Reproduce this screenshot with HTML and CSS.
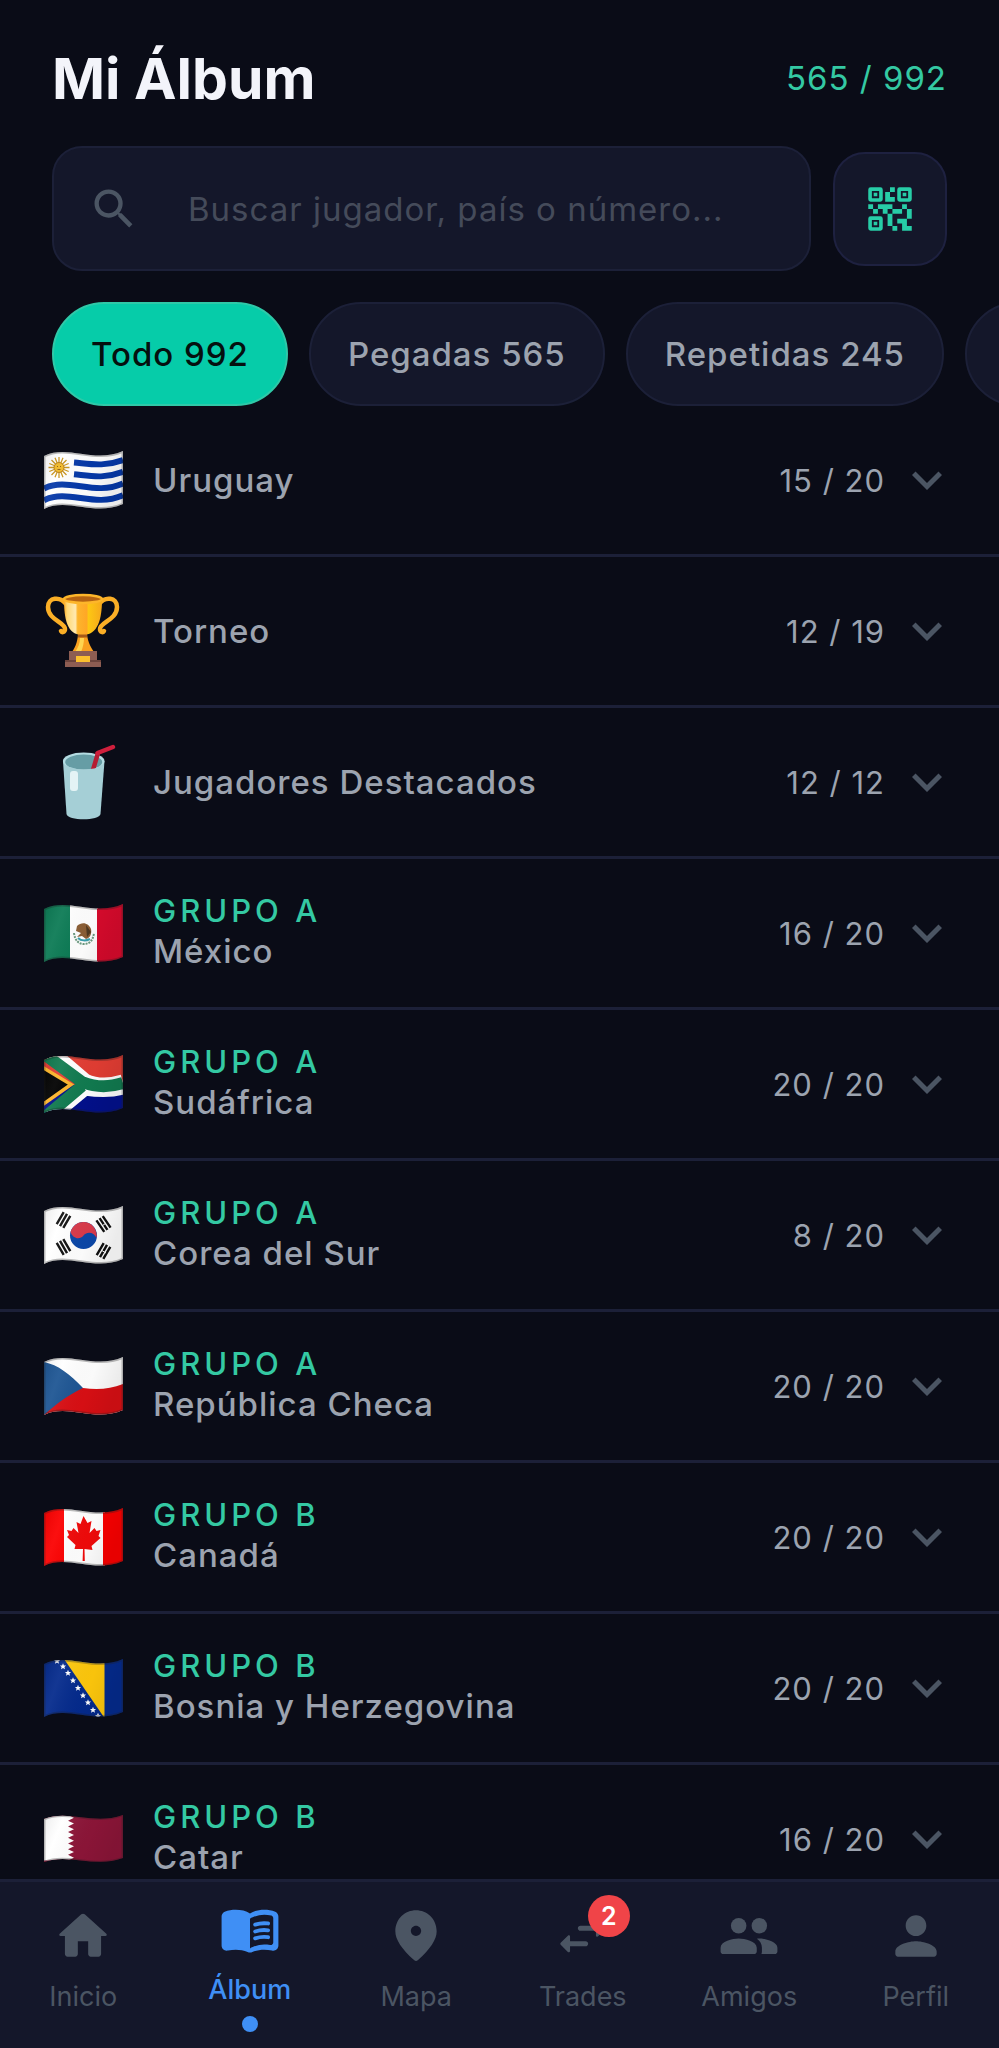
FILE: index.html
```html
<!DOCTYPE html>
<html lang="es">
<head>
<meta charset="utf-8">
<meta name="viewport" content="width=device-width, initial-scale=1">
<title>Mi Álbum</title>
<link rel="stylesheet" href="styles.css">
</head>
<body>
<svg class="defs" aria-hidden="true">
  <defs>
    <clipPath id="wave"><path d="M0 5C24-7 50 13 79 0V53C50 66 24 46 0 58Z"/></clipPath>
    <linearGradient id="shade" x1="0" x2="1" y1="0" y2="0.25">
      <stop offset="0" stop-color="#000" stop-opacity=".08"/>
      <stop offset=".25" stop-color="#fff" stop-opacity=".06"/>
      <stop offset=".65" stop-color="#000" stop-opacity=".02"/>
      <stop offset="1" stop-color="#000" stop-opacity=".08"/>
    </linearGradient>
    <linearGradient id="gold" x1="0" x2="1">
      <stop offset="0" stop-color="#f9a825"/><stop offset=".08" stop-color="#ffd874"/>
      <stop offset=".3" stop-color="#ffe9b0"/><stop offset=".36" stop-color="#fdb52c"/>
      <stop offset=".6" stop-color="#ffa726"/><stop offset=".64" stop-color="#fdc713"/>
      <stop offset="1" stop-color="#f6a81c"/>
    </linearGradient>
    <g id="finish" fill="none" clip-path="url(#wave)">
      <path d="M0 5C24-7 50 13 79 0V53C50 66 24 46 0 58Z" fill="url(#shade)"/>
      <path d="M0 5C24-7 50 13 79 0V53C50 66 24 46 0 58Z" stroke="#222" stroke-opacity=".3" stroke-width="3"/>
    </g>
    <path id="chevron" d="M16.59 8.59L12 13.17 7.41 8.59 6 10l6 6 6-6z"/>
    <path id="star" d="M0-3.2L.9-1 3.1-1 1.4.5 2 2.7 0 1.4-2 2.7-1.4.5-3.1-1-.9-1Z"/>
    <g id="bars"><path d="M-7-3.8H7M-7 0H7M-7 3.8H7" stroke="#111" stroke-width="2.4"/></g>
  </defs>
</svg>

<div class="app">
  <header class="header">
    <div class="title-row">
      <h1 class="title">Mi Álbum</h1>
      <span class="total">565 / 992</span>
    </div>
    <div class="search-row">
      <label class="search">
        <svg class="search-icon" viewBox="0 0 24 24" aria-hidden="true"><path d="M15.5 14h-.79l-.28-.27A6.47 6.47 0 0 0 16 9.5 6.5 6.5 0 1 0 9.5 16c1.61 0 3.09-.59 4.23-1.57l.27.28v.79l5 4.99L20.49 19l-4.99-5zm-6 0C7.01 14 5 11.99 5 9.5S7.01 5 9.5 5 14 7.01 14 9.5 11.99 14 9.5 14z"/></svg>
        <input class="search-input" type="text" placeholder="Buscar jugador, país o número..." aria-label="Buscar">
      </label>
      <button class="scan" type="button" aria-label="Código QR">
        <svg class="scan-icon" viewBox="0 0 24 24" aria-hidden="true"><path fill-rule="evenodd" d="M13 19h2v2h-2zM11 14h2v5h-2zM19 12h2v4h-2zM17 10h2v2h-2zM5 12h2v2H5zM3 10h2v2H3zM12 3h2v2h-2zM4 3h4a1 1 0 0 1 1 1v4a1 1 0 0 1-1 1H4a1 1 0 0 1-1-1V4a1 1 0 0 1 1-1zM4.5 4.5v3h3v-3zM4 15h4a1 1 0 0 1 1 1v4a1 1 0 0 1-1 1H4a1 1 0 0 1-1-1v-4a1 1 0 0 1 1-1zM4.5 16.5v3h3v-3zM16 3h4a1 1 0 0 1 1 1v4a1 1 0 0 1-1 1h-4a1 1 0 0 1-1-1V4a1 1 0 0 1 1-1zM16.500 4.500v3h3v-3zM19 19v-3h-4v2h2v3h4v-2zM13 12h4v2h-4zM7 10h6v2h-2v2H9v-2H7zM10 5h2v2h2v2h-4zM5.250 5.250h1.500v1.500h-1.500zM5.250 17.250h1.500v1.500h-1.500zM17.250 5.250h1.500v1.500h-1.500z"/></svg>
      </button>
    </div>
    <div class="chips">
      <button class="chip chip-active" type="button" aria-pressed="true">Todo 992</button>
      <button class="chip" type="button">Pegadas 565</button>
      <button class="chip" type="button">Repetidas 245</button>
      <button class="chip" type="button" aria-label="Faltan"></button>
    </div>
  </header>

  <main class="list">
    <button class="row" type="button">
      <svg class="flag" viewBox="0 0 79 59" aria-hidden="true">
        <g clip-path="url(#wave)"><path fill="#fff" d="M0 0h79v59H0z"/>
          <g fill="none" stroke="#0538a8" stroke-width="5.900">
            <path d="M30 11.500C47 13 60 16 79 9M30 23.300C47 25 60 28 79 20.800"/>
            <path d="M0 37.500C24 25.500 50 45.500 79 32.500M0 49.300C24 37.300 50 57.300 79 44.300"/>
          </g>
          <g stroke="#c8941a" stroke-width="1.300"><path d="M15 6v21M4.500 16.500h21M7.500 9l15 15M22.500 9l-15 15M11 6.800l8 19.400M19 6.800l-8 19.400M5.300 12.500l19.400 8M24.700 12.500l-19.400 8"/></g>
          <circle cx="15" cy="16.500" r="5" fill="#f0b823" stroke="#b67a14"/>
          <path d="M13 15.500h1M16 15.500h1M13.500 18.500h3" stroke="#8d5c10"/>
        </g><use href="#finish"/>
      </svg>
      <span class="info"><span class="name">Uruguay</span></span>
      <span class="count">15 / 20</span>
      <svg class="chevron" viewBox="0 0 24 24" aria-hidden="true"><use href="#chevron"/></svg>
    </button>

    <button class="row" type="button">
      <svg class="emoji" viewBox="0 0 79 79" aria-hidden="true">
        <g fill="none" stroke="#fbaf26" stroke-width="4.500" stroke-linecap="round"><path d="M22 12C16 4 4 5 4 15C4 28 21 30 21 37C21 40 18 41 17 39"/><path d="M55 12C61 4 73 5 73 15C73 28 56 30 56 37C56 40 59 41 60 39"/></g>
        <path fill="#f9a01f" d="M34 40h9c0 8 3 14 7 20H28c4-6 6-12 6-20z"/><path fill="#ffd54f" d="M36 46h4c0 5-1 9-3 14h-6c3-4 5-9 5-14z"/>
        <path fill="#8d5d52" d="M25 59h28v9h4v7H21v-7h4z"/><path fill="#6d453d" d="M21 68h36v2H21z"/><path fill="#fcc02e" d="M32 64h14v6H32z"/>
        <path fill="url(#gold)" d="M20 7c0 20 3 36 18.500 36S58 27 58 7z"/>
        <ellipse cx="39" cy="7" rx="19" ry="4" fill="#b56312" stroke="#fdb62a" stroke-width="2.500"/>
        <path d="M34 44h9" stroke="#a65a19" stroke-width="3"/>
      </svg>
      <span class="info"><span class="name">Torneo</span></span>
      <span class="count">12 / 19</span>
      <svg class="chevron" viewBox="0 0 24 24" aria-hidden="true"><use href="#chevron"/></svg>
    </button>

    <button class="row" type="button">
      <svg class="emoji" viewBox="0 0 79 79" aria-hidden="true">
        <path fill="#a5cfd6" d="M19 18l3.500 53c1 7 33 7 34 0L60.500 18z"/>
        <ellipse cx="39.700" cy="18" rx="20.800" ry="8.500" fill="#b4dce2"/><ellipse cx="39.700" cy="19" rx="18.500" ry="7.500" fill="#669da5"/>
        <path d="M49 27L54 10" stroke="#b61c32" stroke-width="4.500"/><path d="M53.500 10L69 4" stroke="#cf1f3c" stroke-width="4.500" stroke-linecap="round"/>
        <path fill="#a5cfd6" d="M22 22c6 6 29 6 36 0v7H22z"/>
        <rect x="26" y="28" width="8" height="20" rx="3" fill="#e4f3f5"/>
      </svg>
      <span class="info"><span class="name">Jugadores Destacados</span></span>
      <span class="count">12 / 12</span>
      <svg class="chevron" viewBox="0 0 24 24" aria-hidden="true"><use href="#chevron"/></svg>
    </button>

    <button class="row" type="button">
      <svg class="flag" viewBox="0 0 79 59" aria-hidden="true">
        <g clip-path="url(#wave)"><path fill="#fff" d="M26 0h28v59H26z"/><path fill="#0b7a54" d="M0 0h26v59H0z"/><path fill="#d80a2c" d="M53 0h26v59H53z"/>
          <path d="M30 29c1 8 5 11 10 11s9-3 10-11" fill="none" stroke="#6d9a80" stroke-width="2" stroke-dasharray="2 1"/>
          <path d="M33 22c5-5 12-3 14 3 1 5-1 9-5 10l-4-3-5 1 4-4-5-2z" fill="#8b5e35"/><path d="M42 21l5 7-4 5z" fill="#4e3820"/><path d="M34 34c3 3 8 3 12 1" fill="none" stroke="#39a0ad" stroke-width="2"/>
        </g><use href="#finish"/>
      </svg>
      <span class="info"><span class="group">GRUPO A</span><span class="name">México</span></span>
      <span class="count">16 / 20</span>
      <svg class="chevron" viewBox="0 0 24 24" aria-hidden="true"><use href="#chevron"/></svg>
    </button>

    <button class="row" type="button">
      <svg class="flag" viewBox="0 0 79 59" aria-hidden="true">
        <g clip-path="url(#wave)"><path fill="#e23d33" d="M0 0h79v30H0z"/><path fill="#02108c" d="M0 30h79v29H0z"/>
          <path d="M6-4L41 26C54 32 66 31 79 27M6 62L41 33C54 35 66 36 79 32" fill="none" stroke="#fff" stroke-width="15"/>
          <path d="M0-1L38 27C54 33 66 32 79 28M0 63L38 31" fill="none" stroke="#117b50" stroke-width="12"/>
          <path d="M-2 12L27 29.500-2 50z" fill="#000" stroke="#fdb52a" stroke-width="3.500"/>
        </g><use href="#finish"/>
      </svg>
      <span class="info"><span class="group">GRUPO A</span><span class="name">Sudáfrica</span></span>
      <span class="count">20 / 20</span>
      <svg class="chevron" viewBox="0 0 24 24" aria-hidden="true"><use href="#chevron"/></svg>
    </button>

    <button class="row" type="button">
      <svg class="flag" viewBox="0 0 79 59" aria-hidden="true">
        <g clip-path="url(#wave)"><path fill="#fff" d="M0 0h79v59H0z"/>
          <circle cx="39.500" cy="29.500" r="13.500" fill="#0b47a8"/>
          <path d="M26.500 26C29 19 34 16 39.500 16A13.500 13.500 0 0 1 52.500 32C50 26 43 25 39.500 29.500S29 33 26.500 26Z" fill="#d93a4b"/>
          <use href="#bars" transform="translate(19.500 14) rotate(-60)"/><use href="#bars" transform="translate(59.500 18) rotate(56)"/>
          <use href="#bars" transform="translate(19.500 41) rotate(60)"/><use href="#bars" transform="translate(59.500 45) rotate(-60)"/>
          <path d="M58 20l4-3M57 44l5 3" stroke="#fff"/>
        </g><use href="#finish"/>
      </svg>
      <span class="info"><span class="group">GRUPO A</span><span class="name">Corea del Sur</span></span>
      <span class="count">8 / 20</span>
      <svg class="chevron" viewBox="0 0 24 24" aria-hidden="true"><use href="#chevron"/></svg>
    </button>

    <button class="row" type="button">
      <svg class="flag" viewBox="0 0 79 59" aria-hidden="true">
        <g clip-path="url(#wave)"><path fill="#fff" d="M0 0h79v59H0z"/><path fill="#d90f14" d="M0 59V31h39C54 33 66 32 79 27v32z"/><path fill="#1d5593" d="M0 5C14 8 26 17 39 31C24 38 12 47 0 58z"/></g><use href="#finish"/>
      </svg>
      <span class="info"><span class="group">GRUPO A</span><span class="name">República Checa</span></span>
      <span class="count">20 / 20</span>
      <svg class="chevron" viewBox="0 0 24 24" aria-hidden="true"><use href="#chevron"/></svg>
    </button>

    <button class="row" type="button">
      <svg class="flag" viewBox="0 0 79 59" aria-hidden="true">
        <g clip-path="url(#wave)"><path fill="#fff" d="M19 0h42v59H19z"/><path fill="#fb0000" d="M0 0h20v59H0zM59 0h20v59H59z"/>
          <path fill="#f00a0a" d="M39.500 8l4 7 4-2-2 12 5-5 2 3 4-1-2 6 2 2-9 8 1 4-8-1 .3 12h-2.200l.4-12-8.500 0 1-4-8.500-8 2-2-2-5 4.500 1 2-3 5 5-2-11 4 2z"/>
        </g><use href="#finish"/>
      </svg>
      <span class="info"><span class="group">GRUPO B</span><span class="name">Canadá</span></span>
      <span class="count">20 / 20</span>
      <svg class="chevron" viewBox="0 0 24 24" aria-hidden="true"><use href="#chevron"/></svg>
    </button>

    <button class="row" type="button">
      <svg class="flag" viewBox="0 0 79 59" aria-hidden="true">
        <g clip-path="url(#wave)"><path fill="#042a8c" d="M0 0h79v59H0z"/><path fill="#fdc70c" d="M20 0h40.500v59z"/>
          <g fill="#fff"><use href="#star" x="13" y="2"/><use href="#star" x="19" y="7.500"/><use href="#star" x="24" y="14"/><use href="#star" x="29" y="21.500"/><use href="#star" x="34" y="29"/><use href="#star" x="39" y="36.500"/><use href="#star" x="44" y="43.500"/><use href="#star" x="49" y="51"/><use href="#star" x="54" y="57"/></g>
        </g><use href="#finish"/>
      </svg>
      <span class="info"><span class="group">GRUPO B</span><span class="name">Bosnia y Herzegovina</span></span>
      <span class="count">20 / 20</span>
      <svg class="chevron" viewBox="0 0 24 24" aria-hidden="true"><use href="#chevron"/></svg>
    </button>

    <button class="row" type="button">
      <svg class="flag flag-wide" viewBox="0 0 79 59" preserveAspectRatio="none" aria-hidden="true">
        <g clip-path="url(#wave)"><path fill="#8c1538" d="M0 0h79v59H0z"/><path fill="#fff" d="M0 0h24l6 3.500-6 3.500 6 3.500-6 3.500 6 3.500-6 3.500 6 3.500-6 3.500 6 3.500-6 3.500 6 3.500-6 3.500 6 3.500-6 3.500 6 3.500-6 3.500H0z"/></g><use href="#finish"/>
      </svg>
      <span class="info"><span class="group">GRUPO B</span><span class="name">Catar</span></span>
      <span class="count">16 / 20</span>
      <svg class="chevron" viewBox="0 0 24 24" aria-hidden="true"><use href="#chevron"/></svg>
    </button>
  </main>

  <nav class="nav">
    <a class="tab" href="#inicio">
      <svg class="tab-icon" viewBox="0 0 24 24" aria-hidden="true"><path d="M10 19v-5h4v5c0 .55.45 1 1 1h3c.55 0 1-.45 1-1v-7h1.700c.46 0 .68-.57.33-.87L12.670 3.600c-.38-.34-.96-.34-1.340 0l-8.360 7.530c-.34.3-.13.87.33.87H5v7c0 .55.45 1 1 1h3c.55 0 1-.45 1-1z"/></svg>
      <span class="tab-label">Inicio</span>
    </a>
    <a class="tab tab-active" href="#album" aria-current="page">
      <svg class="tab-icon" viewBox="0 0 24 24" aria-hidden="true"><path d="M17.500 4.500c-1.950 0-4.050.4-5.500 1.500-1.450-1.100-3.550-1.500-5.500-1.500-1.450 0-2.990.22-4.280.79C1.490 5.620 1 6.330 1 7.140v11.280c0 1.300 1.220 2.260 2.480 1.940.98-.25 2.020-.36 3.020-.36 1.560 0 3.220.26 4.560.92.6.3 1.280.3 1.870 0 1.340-.67 3-.92 4.560-.92 1 0 2.040.11 3.020.36 1.260.33 2.480-.63 2.480-1.940V7.140c0-.81-.49-1.520-1.220-1.850-1.280-.57-2.820-.79-4.270-.79zM21 17.230c0 .63-.58 1.090-1.200.98-.75-.14-1.530-.2-2.300-.2-1.700 0-4.150.65-5.500 1.500V8c1.350-.85 3.800-1.500 5.500-1.500.92 0 1.830.09 2.700.28.46.1.8.51.8.98z"/><path d="M14 10.300c1.500-.5 3.400-.65 5-.45M14 12.960c1.500-.5 3.400-.65 5-.45M14 15.620c1.500-.5 3.400-.65 5-.45" fill="none" stroke="currentColor" stroke-width="1.500" stroke-linecap="round"/></svg>
      <span class="tab-label">Álbum</span>
      <span class="tab-dot"></span>
    </a>
    <a class="tab" href="#mapa">
      <svg class="tab-icon" viewBox="0 0 24 24" aria-hidden="true"><path d="M12 2c-4.200 0-8 3.220-8 8.200 0 3.180 2.450 6.920 7.340 11.230.38.33.95.33 1.330 0C17.550 17.120 20 13.380 20 10.200 20 5.220 16.200 2 12 2zm0 10c-1.100 0-2-.9-2-2s.9-2 2-2 2 .9 2 2-.9 2-2 2z"/></svg>
      <span class="tab-label">Mapa</span>
    </a>
    <a class="tab" href="#trades">
      <span class="tab-figure">
        <svg class="tab-icon" viewBox="0 0 24 24" aria-hidden="true"><path d="M6.140 11.860l-2.780 2.790c-.19.2-.19.51 0 .71l2.780 2.790c.31.32.85.09.85-.35V16H13c.55 0 1-.45 1-1s-.45-1-1-1H6.990v-1.790c0-.45-.54-.67-.85-.35zm14.510-3.210l-2.780-2.790c-.31-.32-.85-.09-.85.35V8H11c-.55 0-1 .45-1 1s.45 1 1 1h6.010v1.790c0 .45.54.67.85.35l2.780-2.790c.2-.19.2-.51.01-.7z"/></svg>
        <span class="badge">2</span>
      </span>
      <span class="tab-label">Trades</span>
    </a>
    <a class="tab" href="#amigos">
      <svg class="tab-icon" viewBox="0 0 24 24" aria-hidden="true"><circle cx="8" cy="8" r="3"/><circle cx="16" cy="8" r="3"/><path d="M8 13c-2.330 0-7 1.170-7 3.500V18c0 .55.45 1 1 1h12c.55 0 1-.45 1-1v-1.500c0-2.330-4.670-3.500-7-3.500zM16 13c-.29 0-.62.02-.97.05.02.01.03.03.04.04 1.140.83 1.930 1.940 1.930 3.410V18c0 .35-.07.69-.18 1H22c.55 0 1-.45 1-1v-1.500c0-2.330-4.670-3.500-7-3.500z"/></svg>
      <span class="tab-label">Amigos</span>
    </a>
    <a class="tab" href="#perfil">
      <svg class="tab-icon" viewBox="0 0 24 24" aria-hidden="true"><path d="M12 12c2.210 0 4-1.790 4-4s-1.790-4-4-4-4 1.790-4 4 1.790 4 4 4zm0 2c-2.670 0-8 1.340-8 4v1c0 .55.45 1 1 1h14c.55 0 1-.45 1-1v-1c0-2.660-5.330-4-8-4z"/></svg>
      <span class="tab-label">Perfil</span>
    </a>
  </nav>
</div>
</body>
</html>
```
FILE: styles.css
```css
:root {
  --bg: #0a0c17;
  --panel: #14172a;
  --line: #1c2038;
  --accent: #06cca9;
  --accent-text: #34c9a3;
  --muted: #9ca3af;
  --dim: #4b5563;
  --blue: #3f8ff5;
}

* {
  box-sizing: border-box;
}

body {
  margin: 0;
  background: var(--bg);
  font-family: Inter, Roboto, "Liberation Sans", sans-serif;
}

button,
input {
  font: inherit;
}

.defs {
  position: absolute;
  width: 0;
  height: 0;
}

.app {
  display: flex;
  flex-direction: column;
  height: 100vh;
  overflow: hidden;
}

.header {
  flex: none;
  padding-top: 44px;
}

.title-row,
.search-row {
  display: flex;
  align-items: center;
  padding: 0 52px;
}

.title-row {
  justify-content: space-between;
  height: 68px;
}

.title {
  margin: 0;
  color: #f3f4fa;
  font-size: 57px;
  font-weight: 700;
}

.total {
  color: var(--accent-text);
  font-size: 33px;
  letter-spacing: 1px;
}

.search-row {
  gap: 22px;
  margin-top: 34px;
}

.search {
  display: flex;
  flex: 1;
  align-items: center;
  gap: 48px;
  height: 125px;
  padding: 0 34px;
  border: 2px solid var(--line);
  border-radius: 30px;
  background: var(--panel);
}

.search-icon {
  flex: none;
  width: 52px;
  fill: var(--dim);
}

.search-input {
  flex: 1;
  min-width: 0;
  padding: 0;
  border: 0;
  outline: 0;
  background: none;
  color: var(--muted);
  font-size: 33px;
  letter-spacing: 1px;
}

.search-input::placeholder {
  color: #454b5a;
  opacity: 1;
}

.scan {
  display: grid;
  flex: none;
  place-items: center;
  width: 114px;
  height: 114px;
  padding: 0;
  border: 2px solid #1e2140;
  border-radius: 32px;
  background: var(--panel);
}

.scan-icon {
  width: 58px;
  fill: #27cda7;
}

.chips {
  display: flex;
  gap: 21px;
  margin-top: 31px;
  padding-left: 52px;
  overflow: hidden;
}

.chip {
  flex: none;
  min-width: 180px;
  height: 104px;
  padding: 0 37px;
  border: 2px solid var(--line);
  border-radius: 52px;
  background: var(--panel);
  color: var(--muted);
  font-size: 33px;
  font-weight: 500;
  letter-spacing: 1px;
}

.chip-active {
  border-color: #2fc9a8;
  background: var(--accent);
  color: #05100f;
}

.list {
  flex: 1;
  min-height: 0;
  overflow: hidden;
}

.row {
  display: flex;
  align-items: center;
  width: 100%;
  height: 151px;
  padding: 0 42px 0 44px;
  border: 0;
  border-bottom: 3px solid var(--line);
  background: none;
  color: var(--muted);
  text-align: left;
}

.flag,
.emoji {
  flex: none;
  width: 79px;
}

.flag-wide {
  height: 48px;
}

.emoji {
  overflow: visible;
}

.info {
  display: flex;
  flex: 1;
  flex-direction: column;
  margin-left: 30px;
}

.name,
.group {
  font-weight: 500;
  line-height: 41px;
}

.name {
  font-size: 33px;
  letter-spacing: 1px;
}

.group {
  color: var(--accent-text);
  font-size: 31px;
  letter-spacing: 4px;
}

.group + .name {
  margin-bottom: 5px;
}

.count {
  margin-right: 12px;
  font-size: 31px;
  letter-spacing: 1px;
}

.chevron {
  flex: none;
  width: 60px;
  fill: var(--dim);
}

.nav {
  display: grid;
  flex: none;
  grid-template-columns: repeat(6, 1fr);
  min-height: 169px;
  border-top: 3px solid var(--line);
  background: var(--panel);
}

.tab {
  display: flex;
  flex-direction: column;
  align-items: center;
  padding-top: 23px;
  color: var(--dim);
  text-decoration: none;
}

.tab-active {
  padding-top: 16px;
  color: var(--blue);
}

.tab-figure {
  display: flex;
  position: relative;
}

.tab-icon {
  width: 62px;
  fill: currentColor;
}

.tab-label {
  margin-top: 13px;
  font-size: 27px;
  line-height: 34px;
}

.tab-active .tab-label {
  font-weight: 500;
}

.tab-dot {
  width: 16px;
  height: 16px;
  margin-top: 9px;
  border-radius: 50%;
  background: var(--blue);
}

.badge {
  position: absolute;
  top: -10px;
  right: -16px;
  width: 42px;
  height: 42px;
  border-radius: 50%;
  background: #f04448;
  color: #fff;
  font-size: 25px;
  font-weight: 600;
  line-height: 42px;
  text-align: center;
}
```
